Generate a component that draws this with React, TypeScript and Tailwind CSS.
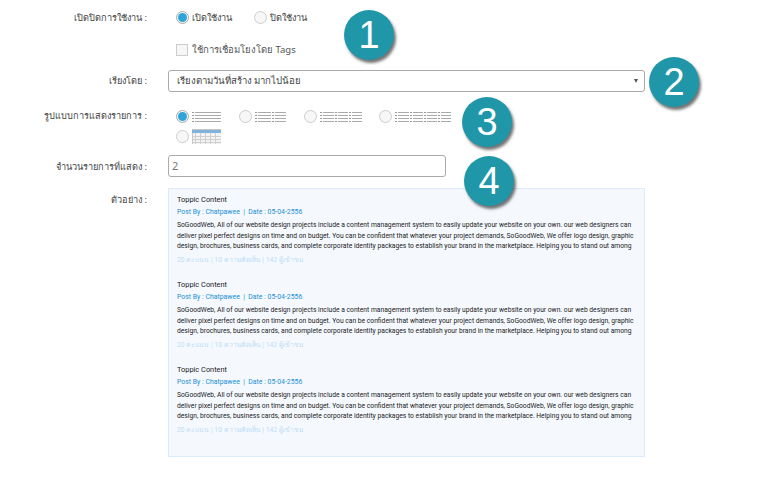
const Lines = ({ groups, width }: { groups: number[]; width: number }) => (
  <svg width={width} height="11" viewBox={`0 0 ${width} 11`} className="mt-[2px] block" shapeRendering="crispEdges">
    {[0.5, 3.5, 6.5, 9.5].map((y) => {
      let x = 0;
      return (
        <g key={y}>
          {groups.map((g, i) => {
            const x0 = x;
            x += g + 1;
            return (
              <g key={i}>
                <rect x={x0} y={y - 0.5} width="2" height="1" fill="#999" />
                <rect x={x0 + 3} y={y - 0.5} width={g - 3} height="1" fill="#aaa" />
              </g>
            );
          })}
        </g>
      );
    })}
  </svg>
);

const TableIcon = () => (
  <svg width="29" height="15" viewBox="0 0 29 15" className="block" shapeRendering="crispEdges">
    <rect x="0" y="0" width="29" height="15" fill="#f3f3f3" stroke="#c4c4c4" />
    <rect x="0" y="1" width="29" height="3" fill="#7fb2dc" />
    {[3, 8, 13, 18, 23].map((x) => (
      <rect key={x} x={x} y="4" width="1" height="11" fill="#cfcfcf" />
    ))}
    {[7, 10, 13].map((y) => (
      <rect key={y} x="0" y={y} width="29" height="1" fill="#cfcfcf" />
    ))}
  </svg>
);

const Radio = ({ on = false }: { on?: boolean }) => (
  <span className={`flex h-[13px] w-[13px] shrink-0 items-center justify-center rounded-full border bg-[#f7f7f7] ${on ? "border-[#aaa]" : "border-[#ccc]"}`}>
    {on && <span className="h-[9px] w-[9px] rounded-full bg-[#2fa4d9]" />}
  </span>
);

const Label = ({ children, className = "" }: { children: React.ReactNode; className?: string }) => (
  <div className={`w-[147px] shrink-0 text-right text-[9.2px] leading-[14px] text-[#444] ${className}`}>{children}</div>
);

const Badge = ({ n, className }: { n: number; className: string }) => (
  <div className={`absolute flex h-[50px] w-[50px] items-center justify-center rounded-full bg-[#1f97a9] font-['Liberation_Sans',sans-serif] text-[38px] leading-none text-white shadow-[2px_3px_3px_rgba(0,0,0,0.55)] ${className}`}>
    {n}
  </div>
);

const Block = () => (
  <div className="mb-[22px] h-[63px] font-['Roboto','Noto_Sans',sans-serif]">
    <div className="text-[7.4px] leading-[12px] text-[#222]">Toppic Content</div>
    <div className="mt-[1px] text-[6.9px] leading-[11px] text-[#1b8fd2]">Post By : Chatpawee&nbsp; |&nbsp; Date : 05-04-2556</div>
    <div className="mt-[2px] whitespace-nowrap text-[6.72px] leading-[10.7px] text-[#222]">
      <div>SoGoodWeb, All of our website design projects include a content management system to easily update your website on your own. our web designers can</div>
      <div>deliver pixel perfect designs on time and on budget. You can be confident that whatever your project demands, SoGoodWeb, We offer logo design, graphic</div>
      <div>design, brochures, business cards, and complete corporate identity packages to establish your brand in the marketplace. Helping you to stand out among</div>
    </div>
    <div className="mt-[3px] text-[6.8px] leading-[11px] text-[#bddcf5]">20 คะแนน | 10 ความคิดเห็น | 142 ผู้เข้าชม</div>
  </div>
);

export default function App() {
  return (
    <div className="relative h-[483px] w-[768px] overflow-hidden bg-white pt-[11px] font-['Noto_Sans','Liberation_Sans',sans-serif]">
      <div className="flex h-[14px] items-center">
        <Label>เปิดปิดการใช้งาน :</Label>
        <div className="ml-[29px] flex items-center text-[9.2px] text-[#444]">
          <Radio on />
          <span className="ml-[3px] w-[62px]">เปิดใช้งาน</span>
          <Radio />
          <span className="ml-[3px]">ปิดใช้งาน</span>
        </div>
      </div>
      <div className="ml-[176px] mt-[19px] flex h-[12px] items-center text-[9.5px] text-[#555]">
        <span className="h-[12px] w-[12px] border border-[#ccc] bg-[#f7f7f7]" />
        <span className="ml-[4px]">ใช้การเชื่อมโยงโดย Tags</span>
      </div>
      <div className="mt-[14px] flex items-center">
        <Label>เรียงโดย :</Label>
        <div className="relative ml-[21px] flex h-[22px] w-[477px] items-center rounded-[3px] border border-[#aaa] pl-[8px] text-[9.6px] text-[#444]">
          เรียงตามวันที่สร้าง มากไปน้อย
          <span className="absolute right-[6px] top-[8px] h-0 w-0 border-x-[2.5px] border-t-[4px] border-x-transparent border-t-[#555]" />
        </div>
      </div>
      <div className="mt-[17px] flex">
        <Label>รูปแบบการแสดงรายการ :</Label>
        <div className="ml-[29px]">
          <div className="flex h-[14px] items-center">
            <Radio on />
            <span className="ml-[3px] w-[47px]"><Lines groups={[29]} width={29} /></span>
            <Radio />
            <span className="ml-[3px] w-[49px]"><Lines groups={[16, 14]} width={31} /></span>
            <Radio />
            <span className="ml-[3px] w-[59px]"><Lines groups={[14, 13, 13]} width={42} /></span>
            <Radio />
            <span className="ml-[3px]"><Lines groups={[14, 13, 13, 13]} width={56} /></span>
          </div>
          <div className="mt-[6px] flex h-[15px] items-center">
            <Radio />
            <span className="ml-[3px]"><TableIcon /></span>
          </div>
        </div>
      </div>
      <div className="mt-[11px] flex items-center">
        <Label className="mt-[2px]">จำนวนรายการที่แสดง :</Label>
        <div className="ml-[21px] flex h-[22px] w-[278px] items-center rounded-[3px] border border-[#aaa] pl-[3px] text-[11px] text-[#777]">2</div>
      </div>
      <div className="mt-[11px] flex">
        <Label className="mt-[5px]">ตัวอย่าง :</Label>
        <div className="ml-[21px] h-[269px] w-[477px] border border-[#dcebfb] bg-[#f5f9fe] pl-[8px] pt-[5px]">
          <Block />
          <Block />
          <Block />
        </div>
      </div>
      <Badge n={1} className="left-[344px] top-[10px]" />
      <Badge n={2} className="left-[649px] top-[57px]" />
      <Badge n={3} className="left-[462px] top-[97px]" />
      <Badge n={4} className="left-[464px] top-[156px]" />
    </div>
  );
}
